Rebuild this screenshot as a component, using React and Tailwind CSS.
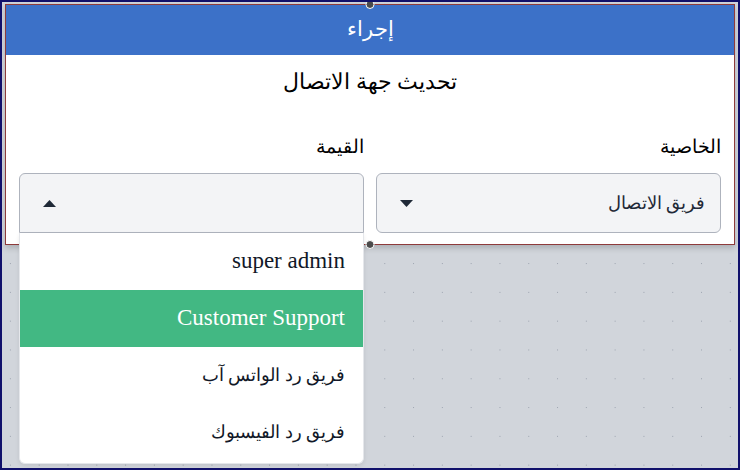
import React from 'react';

const options = ['super admin', 'Customer Support', 'فريق رد الواتس آب', 'فريق رد الفيسبوك'];

const Caret = ({ up }) => (
  <svg width="13" height="7" viewBox="0 0 13 7" className="shrink-0">
    {up ? <path d="M0 7 L6.5 0 L13 7 Z" fill="#1f2937" /> : <path d="M0 0 L13 0 L6.5 7 Z" fill="#1f2937" />}
  </svg>
);

const isLatin = (s) => /^[A-Za-z ]+$/.test(s);

export default function App() {
  const selected = 'Customer Support';

  return (
    <div
      className="w-[740px] h-[470px] border-2 border-[#10106b] bg-[#d1d5db] overflow-hidden font-['Liberation_Serif',serif] bg-[radial-gradient(#9ca3af_0.7px,transparent_0.9px)] bg-[size:28.8px_28.8px] bg-[position:-6px_-12px]"
    >
      {/* node */}
      <div className="relative ml-[3px] mt-[2px] w-[730px] bg-white border border-[#8e3b3b] shadow-[0_3px_6px_rgba(0,0,0,0.18)]" dir="rtl">
        <span className="absolute -top-[5px] left-1/2 -translate-x-1/2 w-[9px] h-[9px] rounded-full bg-[#4b4b4b] border border-white" />
        <span className="absolute -bottom-[5px] left-1/2 -translate-x-1/2 w-[9px] h-[9px] rounded-full bg-[#4b4b4b] border border-white z-20" />

        <div className="h-[50px] bg-[#3c71c8] text-white text-[21px] flex items-center justify-center">إجراء</div>

        <div className="px-[13px] pt-[13px] pb-[11px]">
          <div className="text-center text-[22px] leading-[28px] text-black">تحديث جهة الاتصال</div>

          <div className="mt-[39px] grid grid-cols-2 gap-[12px]">
            {/* property */}
            <div>
              <div className="text-[19px] leading-[24px] text-black mb-[14px]">الخاصية</div>
              <div className="h-[60px] rounded-[6px] border border-[#aeb3bd] bg-[#f3f4f6] flex items-center justify-between pr-[15px] pl-[23px]">
                <span className="text-[18px] text-[#1f2937]">فريق الاتصال</span>
                <Caret />
              </div>
            </div>

            {/* value */}
            <div className="relative">
              <div className="text-[19px] leading-[24px] text-black mb-[14px]">القيمة</div>
              <div className="h-[60px] rounded-t-[6px] border border-[#aeb3bd] bg-[#f3f4f6] flex items-center justify-end pl-[23px]">
                <Caret up />
              </div>
              <div className="absolute left-0 right-0 top-full z-10 bg-white border border-[#e5e7eb] border-t-0 rounded-b-[6px] shadow-[0_2px_4px_rgba(0,0,0,0.08)] pb-[2px]">
                {options.map((o) => (
                  <div
                    key={o}
                    className={`h-[57px] flex items-center pr-[18px] ${isLatin(o) ? 'text-[23px]' : 'text-[18px]'} ${o === selected ? 'bg-[#42b883] text-white' : 'text-[#111827]'}`}
                  >
                    {o}
                  </div>
                ))}
              </div>
            </div>
          </div>
        </div>
      </div>
    </div>
  );
}
